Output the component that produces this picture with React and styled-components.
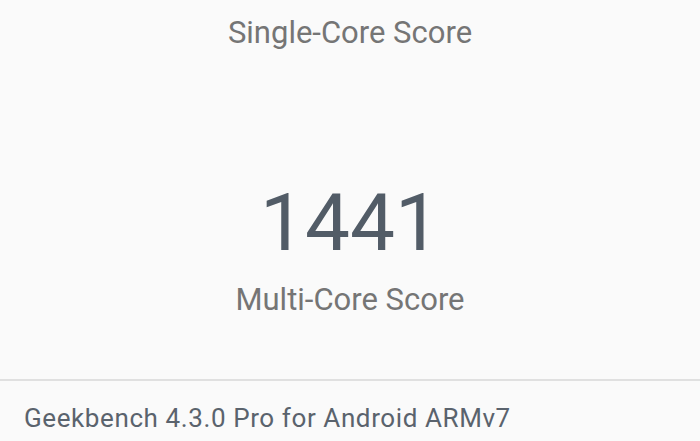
import React from "react";
import styled, { createGlobalStyle } from "styled-components";

const Global = createGlobalStyle`
  html, body { margin: 0; padding: 0; background: #fafafa; }
  body { font-family: Roboto, "Noto Sans", sans-serif; }
`;

const Screen = styled.div`
  width: 700px;
  height: 441px;
  display: flex;
  flex-direction: column;
  background: #fafafa;
  overflow: hidden;
`;

const Scores = styled.section`
  height: 379px;
  display: flex;
  flex-direction: column;
  align-items: center;
`;

const Label = styled.div`
  font-size: 31px;
  line-height: 36px;
  color: #757575;
  margin-top: ${(p) => p.$top}px;
`;

const Value = styled.div`
  font-size: 80px;
  line-height: 94px;
  color: #525c67;
  margin-top: ${(p) => p.$top}px;
`;

const Footer = styled.footer`
  border-top: 2px solid #e0e0e0;
  flex: 1;
  display: flex;
  align-items: center;
  padding: 14px 24px 0;
`;

const Version = styled.div`
  font-size: 26px;
  letter-spacing: 0.6px;
  color: #5a636d;
`;

export default function App() {
  return (
    <>
      <Global />
      <Screen>
        <Scores>
          <Label $top={15}>Single-Core Score</Label>
          <Value $top={125}>1441</Value>
          <Label $top={12}>Multi-Core Score</Label>
        </Scores>
        <Footer>
          <Version>Geekbench 4.3.0 Pro for Android ARMv7</Version>
        </Footer>
      </Screen>
    </>
  );
}
